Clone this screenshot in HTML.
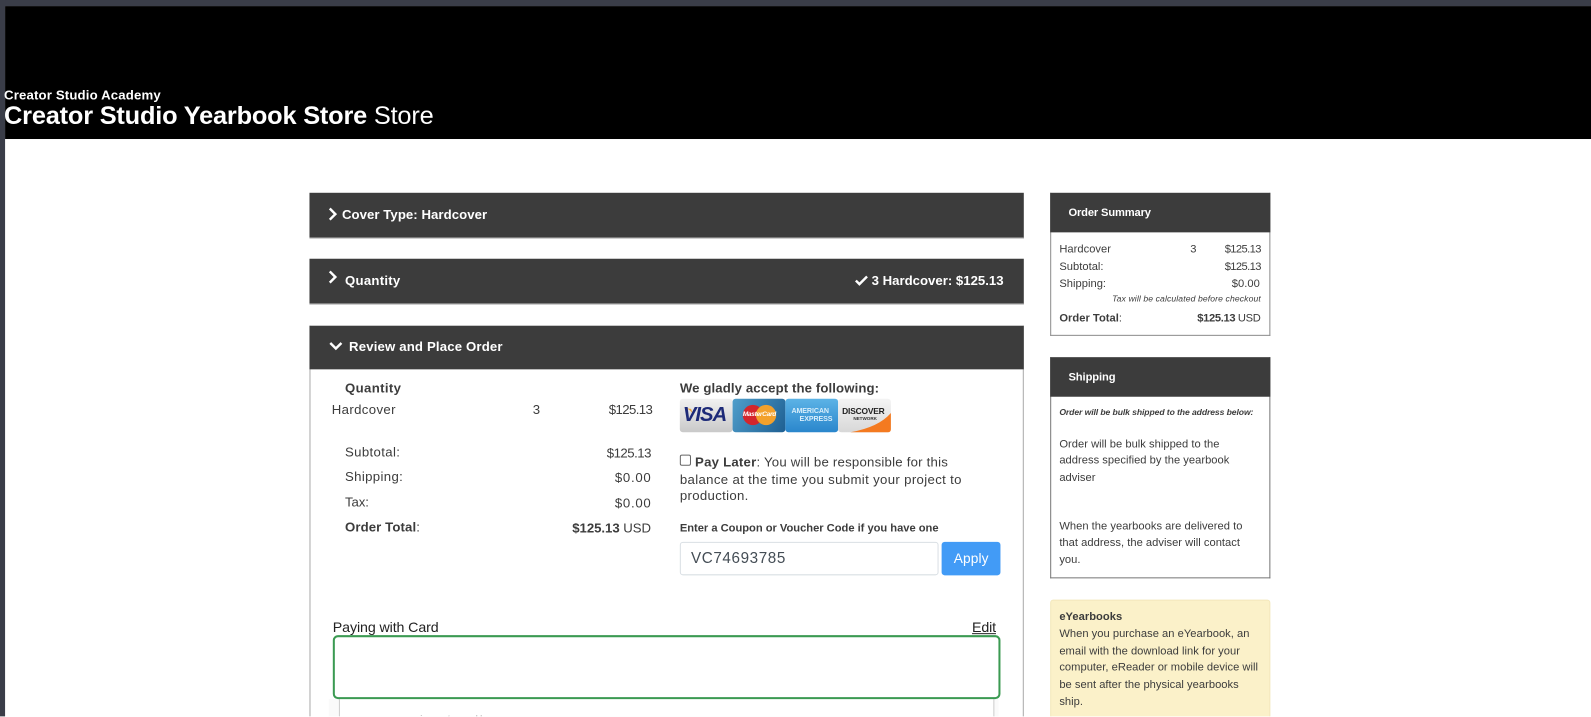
<!DOCTYPE html>
<html>
<head>
<meta charset="utf-8">
<style>
html,body{margin:0;padding:0;background:#fff;width:1591px;height:717px;overflow:hidden;}
body{position:relative;font-family:"Liberation Sans",sans-serif;color:#333;}
#o{position:absolute;left:0;top:0;width:1591px;height:717px;overflow:hidden;}
#p{position:absolute;left:0;top:0;width:1568px;height:706px;overflow:hidden;transform:scale(1.01467);transform-origin:0 0;filter:blur(.35px);}
.b{position:absolute;box-sizing:border-box;}
.t{position:absolute;white-space:nowrap;line-height:16px;height:16px;font-size:13px;letter-spacing:-.1px;color:#3c3c3c;}
.l{letter-spacing:.35px;}
.w{color:#fff;font-weight:bold;}
.s{font-size:11px;line-height:14px;height:14px;letter-spacing:.02px;}
svg{position:absolute;overflow:visible;}
</style>
</head>
<body>
<div id="o"><div id="p">
<div class="b" style="left:0;top:0;width:1591px;height:6px;background:#3a3d48"></div>
<div class="b" style="left:0;top:0;width:5px;height:717px;background:#3a3d48"></div>
<div class="b" style="left:5px;top:6px;width:1586px;height:131px;background:#000"></div>
<div class="t" style="left:4px;top:86px;color:#fff;font-weight:bold;font-size:13px;letter-spacing:.15px">Creator Studio Academy</div>
<div class="t" style="left:4px;top:100px;height:28px;line-height:28px;color:#fff;font-size:25px;letter-spacing:-.2px"><b>Creator Studio Yearbook Store</b> Store</div>

<!-- Main panels -->
<div class="b" style="left:305px;top:190px;width:704px;height:45px;background:#3c3c3c;border-bottom:1px solid #aaa"></div>
<svg style="left:323px;top:204px" width="10" height="14" viewBox="0 0 10 14"><path d="M2 1.5 L7.5 7 L2 12.5" fill="none" stroke="#fff" stroke-width="2.4"/></svg>
<div class="t w" style="left:337px;top:204px;font-size:13px;letter-spacing:.05px">Cover Type: Hardcover</div>

<div class="b" style="left:305px;top:255px;width:704px;height:45px;background:#3c3c3c;border-bottom:1px solid #aaa"></div>
<svg style="left:323px;top:266px" width="10" height="14" viewBox="0 0 10 14"><path d="M2 1.5 L7.5 7 L2 12.5" fill="none" stroke="#fff" stroke-width="2.4"/></svg>
<div class="t w" style="left:340px;top:269px;font-size:13px;letter-spacing:.25px">Quantity</div>
<svg style="left:842px;top:271px" width="14" height="11" viewBox="0 0 14 11"><path d="M1.5 5.5 L5 9 L12.5 1.5" fill="none" stroke="#fff" stroke-width="2.4"/></svg>
<div class="t w" style="left:859px;top:269px;font-size:13px;letter-spacing:0">3 Hardcover: $125.13</div>

<div class="b" style="left:305px;top:321px;width:704px;height:396px;border-left:1px solid #aaa;border-right:1px solid #aaa"></div>
<div class="b" style="left:305px;top:321px;width:704px;height:43px;background:#3c3c3c"></div>
<svg style="left:324px;top:336px" width="14" height="10" viewBox="0 0 14 10"><path d="M1.5 2 L7 7.5 L12.5 2" fill="none" stroke="#fff" stroke-width="2.4"/></svg>
<div class="t w" style="left:344px;top:334px;font-size:13px;letter-spacing:.15px">Review and Place Order</div>

<div class="t l" style="left:340px;top:375px;font-weight:bold">Quantity</div>
<div class="t l" style="left:327px;top:396px">Hardcover</div>
<div class="t" style="left:525px;top:396px">3</div>
<div class="t" style="left:600px;top:396px;letter-spacing:-.6px">$125.13</div>
<div class="t l" style="left:340px;top:438px">Subtotal:</div>
<div class="t" style="left:598px;top:439px;letter-spacing:-.5px">$125.13</div>
<div class="t l" style="left:340px;top:462px">Shipping:</div>
<div class="t" style="left:606px;top:463px;letter-spacing:.7px">$0.00</div>
<div class="t" style="left:340px;top:487px">Tax:</div>
<div class="t" style="left:606px;top:488px;letter-spacing:.7px">$0.00</div>
<div class="t" style="left:340px;top:512px;letter-spacing:.1px"><b>Order Total</b>:</div>
<div class="t" style="left:564px;top:513px;letter-spacing:-.05px"><b>$125.13</b> USD</div>

<div class="t" style="left:670px;top:375px;font-weight:bold;letter-spacing:.1px">We gladly accept the following:</div>

<!-- Cards -->
<div class="b" style="left:670px;top:393px;width:52px;height:33px;background:linear-gradient(#f1f1f1,#c9c9c9);border-radius:3px;overflow:hidden"></div>
<svg style="left:670px;top:393px" width="52" height="33"><path d="M3 9 Q10 9 14 17 L11 10 Z" fill="#e9a33a"/></svg>
<div class="t" style="left:673px;top:399px;height:20px;line-height:20px;font-size:20px;font-style:italic;font-weight:bold;color:#1d2a78;letter-spacing:-1px">VISA</div>
<div class="b" style="left:722px;top:393px;width:52px;height:33px;background:linear-gradient(120deg,#4f9ecb,#1e5f92);border-radius:3px"></div>
<svg style="left:722px;top:393px" width="52" height="33"><circle cx="20" cy="16" r="10" fill="#d4262c"/><circle cx="33" cy="16" r="10" fill="#f3a12c"/></svg>
<div class="t" style="left:732px;top:403px;height:12px;line-height:12px;font-size:6.5px;font-weight:bold;color:#fff;letter-spacing:-.3px;font-style:italic">MasterCard</div>
<div class="b" style="left:774px;top:393px;width:52px;height:33px;background:linear-gradient(#5cb3e6,#2a86cc);border-radius:3px"></div>
<div class="t" style="left:780px;top:401px;height:10px;line-height:10px;font-size:7px;font-weight:bold;color:#d8eefb;letter-spacing:-.1px">AMERICAN</div>
<div class="t" style="left:788px;top:409px;height:10px;line-height:10px;font-size:7px;font-weight:bold;color:#d8eefb;letter-spacing:-.1px">EXPRESS</div>
<div class="b" style="left:826px;top:393px;width:52px;height:33px;background:linear-gradient(#f4f4f4,#d8d8d8);border-radius:3px"></div>
<svg style="left:826px;top:393px" width="52" height="33"><path d="M12 33 Q40 28 52 14 L52 30 Q52 33 49 33 Z" fill="#f47a20"/></svg>
<div class="t" style="left:830px;top:400px;height:10px;line-height:10px;font-size:8.3px;font-weight:bold;color:#222;letter-spacing:-.2px">DISCOVER</div>
<div class="t" style="left:841px;top:410px;height:6px;line-height:6px;font-size:4.5px;font-weight:bold;color:#333;letter-spacing:0">NETWORK</div>

<!-- Pay later -->
<div class="b" style="left:670px;top:448px;width:11px;height:11px;border:1px solid #666;border-radius:2px;background:#fff"></div>
<div class="t" style="left:685px;top:448px;letter-spacing:.22px"><b>Pay Later</b>: You will be responsible for this</div>
<div class="t" style="left:670px;top:465px;letter-spacing:.34px">balance at the time you submit your project to</div>
<div class="t" style="left:670px;top:481px;letter-spacing:.32px">production.</div>
<div class="t s" style="left:670px;top:514px;font-weight:bold;letter-spacing:-.02px">Enter a Coupon or Voucher Code if you have one</div>
<div class="b" style="left:670px;top:534px;width:255px;height:33px;border:1px solid #d9dfe4;border-radius:3px;background:#fff"></div>
<div class="t" style="left:681px;top:543px;font-size:15px;letter-spacing:.6px;color:#444d55">VC74693785</div>
<div class="b" style="left:928px;top:534px;width:58px;height:33px;background:#429bf6;border-radius:3px"></div>
<div class="t" style="left:940px;top:543px;color:#fff;font-size:13.5px;letter-spacing:.1px">Apply</div>

<!-- Paying -->
<div class="t" style="left:328px;top:610px;font-size:14px;color:#222;letter-spacing:-.1px">Paying with Card</div>
<div class="t" style="left:958px;top:610px;font-size:14px;color:#222;letter-spacing:-.15px;text-decoration:underline">Edit</div>
<div class="b" style="left:324px;top:689px;width:660px;height:28px;background:#fafafa"></div>
<div class="b" style="left:334px;top:689px;width:646px;height:28px;background:#fff;border-left:1px solid #ccc;border-right:1px solid #ccc"></div>
<div class="t" style="left:396px;top:700px;font-size:9px;color:#ccc;letter-spacing:2px;font-weight:bold">. . i . . t . . ll</div>
<div class="b" style="left:328px;top:626px;width:658px;height:63px;background:#fff;border:2px solid #3b9a52;border-radius:5px"></div>

<!-- Order Summary -->
<div class="b" style="left:1035px;top:190px;width:217px;height:141px;border:1px solid #8c8c8c;border-top:none;background:#fff"></div>
<div class="b" style="left:1035px;top:190px;width:217px;height:39px;background:#3c3c3c"></div>
<div class="t w" style="left:1053px;top:202px;font-size:11px;letter-spacing:-.15px">Order Summary</div>
<div class="t s" style="left:1044px;top:239px">Hardcover</div>
<div class="t s" style="left:1173px;top:239px">3</div>
<div class="t s" style="left:1207px;top:239px;letter-spacing:-.6px">$125.13</div>
<div class="t s" style="left:1044px;top:256px">Subtotal:</div>
<div class="t s" style="left:1207px;top:256px;letter-spacing:-.6px">$125.13</div>
<div class="t s" style="left:1044px;top:273px">Shipping:</div>
<div class="t s" style="left:1214px;top:273px">$0.00</div>
<div class="t s" style="left:1096px;top:288px;height:12px;line-height:12px;font-size:8.5px;font-style:italic;letter-spacing:.1px">Tax will be calculated before checkout</div>
<div class="t s" style="left:1044px;top:307px"><b>Order Total</b>:</div>
<div class="t s" style="left:1180px;top:307px;letter-spacing:-.35px"><b>$125.13</b> USD</div>

<!-- Shipping -->
<div class="b" style="left:1035px;top:352px;width:217px;height:218px;border:1px solid #777;border-top:none;background:#fff"></div>
<div class="b" style="left:1035px;top:352px;width:217px;height:39px;background:#3c3c3c"></div>
<div class="t w" style="left:1053px;top:364px;font-size:11px;letter-spacing:-.08px">Shipping</div>
<div class="t s" style="left:1044px;top:400px;height:12px;line-height:12px;font-size:8.5px;font-style:italic;font-weight:bold;letter-spacing:-.1px">Order will be bulk shipped to the address below:</div>
<div class="t s" style="left:1044px;top:431px">Order will be bulk shipped to the</div>
<div class="t s" style="left:1044px;top:447px">address specified by the yearbook</div>
<div class="t s" style="left:1044px;top:464px">adviser</div>
<div class="t s" style="left:1044px;top:512px">When the yearbooks are delivered to</div>
<div class="t s" style="left:1044px;top:528px">that address, the adviser will contact</div>
<div class="t s" style="left:1044px;top:545px">you.</div>

<!-- eYearbooks -->
<div class="b" style="left:1035px;top:591px;width:217px;height:130px;background:#fbf1c9;border:1px solid #f3e7ba;border-radius:3px"></div>
<div class="t s" style="left:1044px;top:601px;font-weight:bold">eYearbooks</div>
<div class="t s" style="left:1044px;top:618px">When you purchase an eYearbook, an</div>
<div class="t s" style="left:1044px;top:635px">email with the download link for your</div>
<div class="t s" style="left:1044px;top:651px">computer, eReader or mobile device will</div>
<div class="t s" style="left:1044px;top:668px">be sent after the physical yearbooks</div>
<div class="t s" style="left:1044px;top:685px">ship.</div>
</div></div>
</body>
</html>
